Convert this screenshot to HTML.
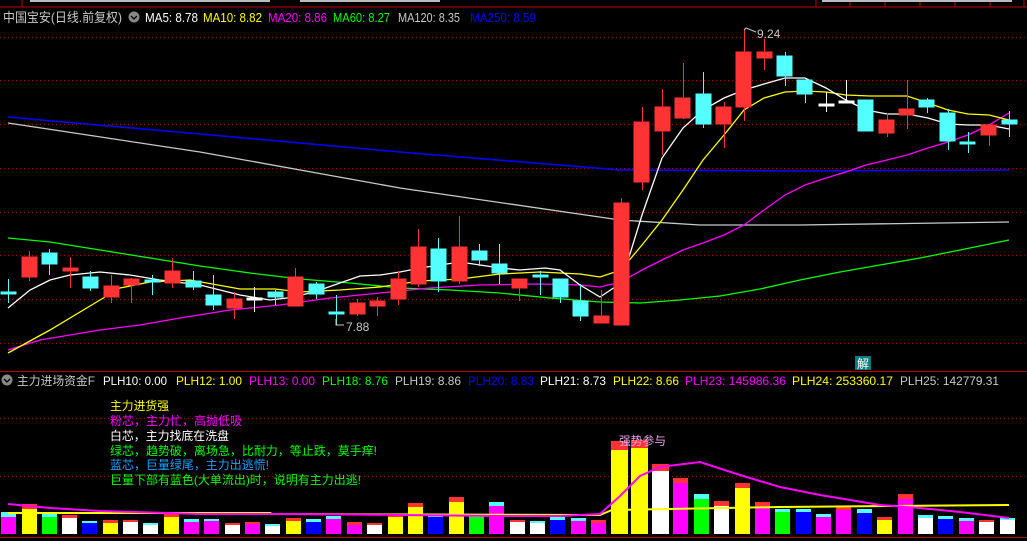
<!DOCTYPE html>
<html><head><meta charset="utf-8"><style>
html,body{margin:0;padding:0;background:#000;width:1027px;height:541px;overflow:hidden}
svg{display:block}
text{font-family:"Liberation Sans","Noto Sans CJK SC",sans-serif}
</style></head><body>
<svg width="1027" height="541" viewBox="0 0 1027 541" xmlns="http://www.w3.org/2000/svg">
<rect width="1027" height="541" fill="#000"/>
<rect x="0" y="0" width="1027" height="7" fill="#000"/>
<line x1="0" y1="7" x2="1027" y2="7" stroke="#c00000" stroke-width="1"/>
<line x1="22" y1="0" x2="22" y2="7" stroke="#c00000"/>
<g stroke="#c00000"><line x1="816" y1="0" x2="816" y2="7"/><line x1="850" y1="0" x2="850" y2="7"/><line x1="885" y1="0" x2="885" y2="7"/><line x1="920" y1="0" x2="920" y2="7"/><line x1="955" y1="0" x2="955" y2="7"/><line x1="990" y1="0" x2="990" y2="7"/><line x1="1024" y1="0" x2="1024" y2="7"/></g>
<g fill="#bbb"><rect x="30" y="0" width="240" height="2"/><rect x="300" y="0" width="140" height="2"/><rect x="822" y="0" width="190" height="2"/></g>

<g font-size="13">
<text x="3" y="22" fill="#c8c8c8" textLength="119" lengthAdjust="spacingAndGlyphs">中国宝安(日线.前复权)</text>
<text x="145" y="22" fill="#fff" textLength="53" lengthAdjust="spacingAndGlyphs">MA5: 8.78</text>
<text x="203" y="22" fill="#ffff00" textLength="59" lengthAdjust="spacingAndGlyphs">MA10: 8.82</text>
<text x="268" y="22" fill="#ff00ff" textLength="59" lengthAdjust="spacingAndGlyphs">MA20: 8.86</text>
<text x="333" y="22" fill="#00ff00" textLength="57" lengthAdjust="spacingAndGlyphs">MA60: 8.27</text>
<text x="398" y="22" fill="#c8c8c8" textLength="62" lengthAdjust="spacingAndGlyphs">MA120: 8.35</text>
<text x="470" y="22" fill="#0000ff" textLength="66" lengthAdjust="spacingAndGlyphs">MA250: 8.59</text>
</g>
<circle cx="134" cy="17" r="5.5" fill="#888"/><path d="M131 16l3 3 3-3" stroke="#000" stroke-width="1.3" fill="none"/>

<g stroke="#a00000" stroke-width="1" stroke-dasharray="1,3">
<line x1="0" y1="37.5" x2="1027" y2="37.5"/><line x1="0" y1="80.5" x2="1027" y2="80.5"/><line x1="0" y1="124.5" x2="1027" y2="124.5"/><line x1="0" y1="168.5" x2="1027" y2="168.5"/><line x1="0" y1="212.5" x2="1027" y2="212.5"/><line x1="0" y1="255.5" x2="1027" y2="255.5"/><line x1="0" y1="299.5" x2="1027" y2="299.5"/><line x1="0" y1="343.5" x2="1027" y2="343.5"/>
<line x1="0" y1="418.5" x2="1027" y2="418.5"/><line x1="0" y1="476.5" x2="1027" y2="476.5"/>
</g>

<g fill="none" stroke-width="1.3">
<polyline stroke="#0000ff" stroke-width="1.6" points="8,117 200,134 400,152 620,170 800,171 1009,170"/>
<polyline stroke="#c8c8c8" points="8,123 200,152 400,188 620,220 700,225 800,225 1009,222"/>
<polyline stroke="#00ff00" points="8,238 50,242 100,250 150,258 200,266 250,273 300,279 350,283 400,288 450,290 500,293 550,298 600,302 640,303 680,300 720,296 760,289 800,280 840,272 880,265 920,258 960,250 1009,240"/>
<polyline stroke="#ff00ff" points="8,350 40,340 70,335 100,330 140,325 180,318 230,310 280,305 330,298 380,293 430,288 480,285 540,284 580,285 600,287 621,282 642,270 662,260 683,250 703,243 724,235 744,225 764,210 785,195 805,185 826,178 846,172 866,165 887,160 907,155 928,148 948,142 968,135 989,125 1009,113"/>
<polyline stroke="#ffff00" points="8,353 50,330 100,300 120,288 150,282 190,280 240,289 275,289 300,292 340,290 380,287 420,281 460,279 500,274 540,272 580,274 600,277 621,270 642,245 662,220 683,190 703,160 724,135 744,110 764,98 785,92 805,91 826,92 846,95 870,96 907,96 928,103 948,110 968,114 989,115 1009,120"/>
<polyline stroke="#ffffff" points="8,308 30,290 50,280 70,275 100,272 130,275 160,280 200,285 240,295 270,300 295,297 320,290 340,283 360,276 380,275 400,272 420,268 440,265 460,262 480,265 500,268 520,270 545,268 560,270 580,285 600,297 621,283 642,215 662,158 683,128 703,110 724,98 744,90 764,84 785,78 805,78 826,88 846,100 866,110 887,114 907,114 928,118 948,124 968,125 989,125 1009,129"/>
</g>

<g stroke-width="1">
<g stroke="#ff3333" fill="#ff3333">
<line x1="29.5" y1="251" x2="29.5" y2="281"/><rect x="22" y="257" width="15" height="20"/>
<line x1="70.5" y1="257" x2="70.5" y2="288"/><rect x="63" y="268" width="15" height="3"/>
<line x1="111.5" y1="275" x2="111.5" y2="303"/><rect x="104" y="286" width="15" height="11"/>
<line x1="131.5" y1="278" x2="131.5" y2="303"/><rect x="124" y="279" width="15" height="6"/>
<line x1="172.5" y1="258" x2="172.5" y2="288"/><rect x="165" y="271" width="15" height="12"/>
<line x1="234.5" y1="292" x2="234.5" y2="319"/><rect x="227" y="299" width="15" height="9"/>
<line x1="295.5" y1="268" x2="295.5" y2="306"/><rect x="288" y="277" width="15" height="29"/>
<line x1="357.5" y1="299" x2="357.5" y2="316"/><rect x="350" y="303" width="15" height="11"/>
<line x1="377.5" y1="297" x2="377.5" y2="316"/><rect x="370" y="301" width="15" height="5"/>
<line x1="398.5" y1="271" x2="398.5" y2="305"/><rect x="391" y="279" width="15" height="20"/>
<line x1="418.5" y1="229" x2="418.5" y2="287"/><rect x="411" y="247" width="15" height="37"/>
<line x1="459.5" y1="216" x2="459.5" y2="284"/><rect x="452" y="247" width="15" height="34"/>
<line x1="519.5" y1="279" x2="519.5" y2="301"/><rect x="512" y="279" width="15" height="9"/>
<line x1="601.5" y1="290" x2="601.5" y2="323"/><rect x="594" y="316" width="15" height="7"/>
<line x1="621.5" y1="198" x2="621.5" y2="325"/><rect x="614" y="203" width="15" height="122"/>
<line x1="642.5" y1="107" x2="642.5" y2="190"/><rect x="634" y="122" width="15" height="60"/>
<line x1="662.5" y1="89" x2="662.5" y2="155"/><rect x="655" y="107" width="15" height="24"/>
<line x1="683.5" y1="63" x2="683.5" y2="119"/><rect x="675" y="98" width="15" height="20"/>
<line x1="724.5" y1="102" x2="724.5" y2="148"/><rect x="716" y="107" width="15" height="17"/>
<line x1="744.5" y1="30" x2="744.5" y2="121"/><rect x="736" y="52" width="15" height="55"/>
<line x1="764.5" y1="39" x2="764.5" y2="70"/><rect x="757" y="52" width="15" height="6"/>
<line x1="887.5" y1="113" x2="887.5" y2="137"/><rect x="879" y="120" width="15" height="13"/>
<line x1="907.5" y1="80" x2="907.5" y2="129"/><rect x="899" y="109" width="15" height="6"/>
<line x1="989.5" y1="125" x2="989.5" y2="146"/><rect x="981" y="125" width="15" height="10"/>
</g>
<g stroke="#54ffff" fill="#54ffff">
<line x1="8.5" y1="279" x2="8.5" y2="303"/><rect x="1" y="292" width="15" height="2"/>
<line x1="49.5" y1="249" x2="49.5" y2="275"/><rect x="42" y="253" width="15" height="11"/>
<line x1="90.5" y1="271" x2="90.5" y2="291"/><rect x="83" y="277" width="15" height="11"/>
<line x1="152.5" y1="275" x2="152.5" y2="295"/><rect x="145" y="280" width="15" height="2"/>
<line x1="193.5" y1="271" x2="193.5" y2="290"/><rect x="186" y="281" width="15" height="6"/>
<line x1="213.5" y1="275" x2="213.5" y2="310"/><rect x="206" y="295" width="15" height="10"/>
<line x1="275.5" y1="290" x2="275.5" y2="305"/><rect x="268" y="292" width="15" height="5"/>
<line x1="316.5" y1="282" x2="316.5" y2="299"/><rect x="309" y="284" width="15" height="10"/>
<line x1="336.5" y1="295" x2="336.5" y2="325"/><rect x="329" y="312" width="15" height="2"/>
<line x1="438.5" y1="238" x2="438.5" y2="292"/><rect x="431" y="249" width="15" height="32"/>
<line x1="479.5" y1="244" x2="479.5" y2="266"/><rect x="472" y="251" width="15" height="9"/>
<line x1="499.5" y1="244" x2="499.5" y2="284"/><rect x="492" y="264" width="15" height="9"/>
<line x1="540.5" y1="271" x2="540.5" y2="295"/><rect x="533" y="275" width="15" height="2"/>
<line x1="560.5" y1="279" x2="560.5" y2="303"/><rect x="553" y="279" width="15" height="18"/>
<line x1="580.5" y1="284" x2="580.5" y2="321"/><rect x="573" y="301" width="15" height="15"/>
<line x1="703.5" y1="72" x2="703.5" y2="128"/><rect x="696" y="94" width="15" height="30"/>
<line x1="785.5" y1="52" x2="785.5" y2="86"/><rect x="777" y="56" width="15" height="20"/>
<line x1="805.5" y1="80" x2="805.5" y2="103"/><rect x="797" y="80" width="15" height="14"/>
<line x1="866.5" y1="100" x2="866.5" y2="131"/><rect x="858" y="100" width="15" height="31"/>
<line x1="927.5" y1="98" x2="927.5" y2="113"/><rect x="919" y="100" width="15" height="7"/>
<line x1="948.5" y1="109" x2="948.5" y2="150"/><rect x="940" y="113" width="15" height="28"/>
<line x1="968.5" y1="132" x2="968.5" y2="153"/><rect x="960" y="142" width="15" height="2"/>
<line x1="1009.5" y1="111" x2="1009.5" y2="137"/><rect x="1002" y="120" width="15" height="4"/>
</g>
<g stroke="#fff" fill="#fff">
<line x1="254.5" y1="287" x2="254.5" y2="312"/><rect x="247" y="298" width="15" height="2"/>
<line x1="826.5" y1="92" x2="826.5" y2="112"/><rect x="819" y="104" width="15" height="2"/>
<line x1="846.5" y1="80" x2="846.5" y2="103"/><rect x="839" y="101" width="15" height="2"/>
</g>
</g>
<path d="M336 319 v6 h8" stroke="#c8c8c8" fill="none"/>
<text x="346" y="331" font-size="12" fill="#c8c8c8">7.88</text>
<path d="M744 30 l2 -2 l10 4" stroke="#c8c8c8" fill="none"/>
<text x="757" y="38" font-size="12" fill="#c8c8c8">9.24</text>
<rect x="855" y="356" width="16" height="14" fill="#0b7d80"/>
<text x="857" y="368" font-size="12" fill="#fff">解</text>

<line x1="0" y1="371.5" x2="1027" y2="371.5" stroke="#c00000"/>

<circle cx="7" cy="380" r="5.5" fill="#888"/><path d="M4 379l3 3 3-3" stroke="#000" stroke-width="1.3" fill="none"/>
<g font-size="12">
<text x="17" y="385" fill="#c8c8c8" textLength="78" lengthAdjust="spacingAndGlyphs">主力进场资金F</text>
<text x="103" y="385" fill="#fff" textLength="64" lengthAdjust="spacingAndGlyphs">PLH10: 0.00</text>
<text x="176" y="385" fill="#ffff00" textLength="66" lengthAdjust="spacingAndGlyphs">PLH12: 1.00</text>
<text x="249" y="385" fill="#ff00ff" textLength="66" lengthAdjust="spacingAndGlyphs">PLH13: 0.00</text>
<text x="322" y="385" fill="#00ff00" textLength="66" lengthAdjust="spacingAndGlyphs">PLH18: 8.76</text>
<text x="395" y="385" fill="#c8c8c8" textLength="66" lengthAdjust="spacingAndGlyphs">PLH19: 8.86</text>
<text x="468" y="385" fill="#0000ff" textLength="66" lengthAdjust="spacingAndGlyphs">PLH20: 8.83</text>
<text x="540" y="385" fill="#fff" textLength="66" lengthAdjust="spacingAndGlyphs">PLH21: 8.73</text>
<text x="613" y="385" fill="#ffff00" textLength="66" lengthAdjust="spacingAndGlyphs">PLH22: 8.66</text>
<text x="685" y="385" fill="#ff00ff" textLength="101" lengthAdjust="spacingAndGlyphs">PLH23: 145986.36</text>
<text x="792" y="385" fill="#ffff00" textLength="101" lengthAdjust="spacingAndGlyphs">PLH24: 253360.17</text>
<text x="900" y="385" fill="#c8c8c8" textLength="99" lengthAdjust="spacingAndGlyphs">PLH25: 142779.31</text>
</g>

<g font-size="12">
<text x="110" y="410" fill="#ffff00" textLength="59" lengthAdjust="spacingAndGlyphs">主力进货强</text>
<text x="110" y="425" fill="#ff00ff" textLength="132" lengthAdjust="spacingAndGlyphs">粉芯，主力忙，高抛低吸</text>
<text x="110" y="440" fill="#fff" textLength="119" lengthAdjust="spacingAndGlyphs">白芯，主力找底在洗盘</text>
<text x="110" y="455" fill="#00ff00" textLength="267" lengthAdjust="spacingAndGlyphs">绿芯，趋势破，离场急，比耐力，等止跌，莫手痒!</text>
<text x="110" y="469" fill="#1fa0ff" textLength="159" lengthAdjust="spacingAndGlyphs">蓝芯，巨量绿尾，主力出逃慌!</text>
<text x="110" y="484" fill="#00ff00" textLength="251" lengthAdjust="spacingAndGlyphs">巨量下部有蓝色(大单流出)时，说明有主力出逃!</text>
</g>

<g>
<rect x="1" y="512" width="15" height="5" fill="#54ffff"/><rect x="1" y="517" width="15" height="17" fill="#ff00ff"/>
<rect x="22" y="504" width="15" height="5" fill="#ff3333"/><rect x="22" y="509" width="15" height="25" fill="#ffff00"/>
<rect x="42" y="512" width="15" height="5" fill="#54ffff"/><rect x="42" y="517" width="15" height="17" fill="#00ff00"/>
<rect x="62" y="515" width="15" height="3" fill="#ff3333"/><rect x="62" y="518" width="15" height="16" fill="#fff"/>
<rect x="82" y="521" width="15" height="2" fill="#54ffff"/><rect x="82" y="523" width="15" height="11" fill="#0000ff"/>
<rect x="103" y="520" width="15" height="3" fill="#ff3333"/><rect x="103" y="523" width="15" height="11" fill="#ffff00"/>
<rect x="123" y="520" width="15" height="2" fill="#ff3333"/><rect x="123" y="522" width="15" height="12" fill="#fff"/>
<rect x="143" y="523" width="15" height="2" fill="#54ffff"/><rect x="143" y="525" width="15" height="9" fill="#fff"/>
<rect x="164" y="514" width="15" height="3" fill="#ff3333"/><rect x="164" y="517" width="15" height="17" fill="#ffff00"/>
<rect x="184" y="519" width="15" height="3" fill="#54ffff"/><rect x="184" y="522" width="15" height="12" fill="#ff00ff"/>
<rect x="204" y="519" width="15" height="2" fill="#54ffff"/><rect x="204" y="521" width="15" height="13" fill="#ff00ff"/>
<rect x="225" y="523" width="15" height="2" fill="#ff3333"/><rect x="225" y="525" width="15" height="9" fill="#fff"/>
<rect x="245" y="522" width="15" height="2" fill="#ff3333"/><rect x="245" y="524" width="15" height="10" fill="#ff00ff"/>
<rect x="265" y="524" width="15" height="2" fill="#54ffff"/><rect x="265" y="526" width="15" height="8" fill="#fff"/>
<rect x="286" y="518" width="15" height="3" fill="#ff3333"/><rect x="286" y="521" width="15" height="13" fill="#ffff00"/>
<rect x="306" y="519" width="15" height="3" fill="#54ffff"/><rect x="306" y="522" width="15" height="12" fill="#0000ff"/>
<rect x="326" y="516" width="15" height="3" fill="#54ffff"/><rect x="326" y="519" width="15" height="15" fill="#ff00ff"/>
<rect x="347" y="522" width="15" height="3" fill="#ff3333"/><rect x="347" y="525" width="15" height="9" fill="#ff00ff"/>
<rect x="367" y="523" width="15" height="2" fill="#ff3333"/><rect x="367" y="525" width="15" height="9" fill="#fff"/>
<rect x="388" y="514" width="15" height="3" fill="#ff3333"/><rect x="388" y="517" width="15" height="17" fill="#ffff00"/>
<rect x="408" y="503" width="15" height="4" fill="#ff3333"/><rect x="408" y="507" width="15" height="27" fill="#ffff00"/>
<rect x="428" y="515" width="15" height="2" fill="#54ffff"/><rect x="428" y="517" width="15" height="17" fill="#0000ff"/>
<rect x="449" y="497" width="15" height="5" fill="#ff3333"/><rect x="449" y="502" width="15" height="32" fill="#ffff00"/>
<rect x="469" y="515" width="15" height="2" fill="#54ffff"/><rect x="469" y="517" width="15" height="17" fill="#00ff00"/>
<rect x="489" y="502" width="15" height="4" fill="#54ffff"/><rect x="489" y="506" width="15" height="28" fill="#ff00ff"/>
<rect x="510" y="520" width="15" height="2" fill="#ff3333"/><rect x="510" y="522" width="15" height="12" fill="#fff"/>
<rect x="530" y="521" width="15" height="2" fill="#54ffff"/><rect x="530" y="523" width="15" height="11" fill="#fff"/>
<rect x="550" y="517" width="15" height="3" fill="#54ffff"/><rect x="550" y="520" width="15" height="14" fill="#0000ff"/>
<rect x="571" y="518" width="15" height="3" fill="#54ffff"/><rect x="571" y="521" width="15" height="13" fill="#ff00ff"/>
<rect x="591" y="520" width="15" height="3" fill="#ff3333"/><rect x="591" y="523" width="15" height="11" fill="#ff00ff"/>
<rect x="611" y="441" width="17" height="9" fill="#ff3333"/><rect x="611" y="450" width="17" height="84" fill="#ffff00"/>
<rect x="631" y="440" width="17" height="8" fill="#ff3333"/><rect x="631" y="448" width="17" height="86" fill="#ffff00"/>
<rect x="652" y="464" width="17" height="7" fill="#ff3333"/><rect x="652" y="471" width="17" height="63" fill="#fff"/>
<rect x="673" y="478" width="15" height="5" fill="#ff3333"/><rect x="673" y="483" width="15" height="51" fill="#ff00ff"/>
<rect x="694" y="494" width="15" height="5" fill="#54ffff"/><rect x="694" y="499" width="15" height="35" fill="#00ff00"/>
<rect x="714" y="501" width="15" height="5" fill="#ff3333"/><rect x="714" y="506" width="15" height="28" fill="#fff"/>
<rect x="735" y="483" width="15" height="5" fill="#ff3333"/><rect x="735" y="488" width="15" height="46" fill="#ffff00"/>
<rect x="755" y="502" width="15" height="4" fill="#ff3333"/><rect x="755" y="506" width="15" height="28" fill="#ff00ff"/>
<rect x="775" y="509" width="15" height="3" fill="#54ffff"/><rect x="775" y="512" width="15" height="22" fill="#00ff00"/>
<rect x="796" y="509" width="15" height="3" fill="#54ffff"/><rect x="796" y="512" width="15" height="22" fill="#0000ff"/>
<rect x="816" y="514" width="15" height="3" fill="#54ffff"/><rect x="816" y="517" width="15" height="17" fill="#ff00ff"/>
<rect x="836" y="506" width="15" height="4" fill="#ff3333"/><rect x="836" y="510" width="15" height="24" fill="#ff00ff"/>
<rect x="857" y="509" width="15" height="4" fill="#54ffff"/><rect x="857" y="513" width="15" height="21" fill="#0000ff"/>
<rect x="877" y="517" width="15" height="3" fill="#ff3333"/><rect x="877" y="520" width="15" height="14" fill="#ffff00"/>
<rect x="898" y="494" width="15" height="5" fill="#ff3333"/><rect x="898" y="499" width="15" height="35" fill="#ff00ff"/>
<rect x="918" y="515" width="15" height="3" fill="#54ffff"/><rect x="918" y="518" width="15" height="16" fill="#fff"/>
<rect x="938" y="516" width="15" height="3" fill="#54ffff"/><rect x="938" y="519" width="15" height="15" fill="#0000ff"/>
<rect x="959" y="518" width="15" height="3" fill="#54ffff"/><rect x="959" y="521" width="15" height="13" fill="#ff00ff"/>
<rect x="979" y="520" width="15" height="2" fill="#ff3333"/><rect x="979" y="522" width="15" height="12" fill="#fff"/>
<rect x="1000" y="518" width="15" height="2" fill="#54ffff"/><rect x="1000" y="520" width="15" height="14" fill="#fff"/>
</g>
<polyline fill="none" stroke="#ffff00" stroke-width="2" points="8,513 270,513 272,514 600,515 612,510 780,507 1009,505"/>
<polyline fill="none" stroke="#ff00ff" stroke-width="2" points="8,504 50,508 100,511 200,514 300,514 400,515 500,516 560,516 600,514 620,496 640,476 660,467 700,462 740,475 780,487 820,495 850,500 880,505 920,508 960,512 1009,518"/>
<text x="619" y="445" font-size="12" fill="#e6a0e6" textLength="47" lengthAdjust="spacingAndGlyphs">强势参与</text>
<line x1="0" y1="537.5" x2="1027" y2="537.5" stroke="#c00000"/>
</svg>
</body></html>
